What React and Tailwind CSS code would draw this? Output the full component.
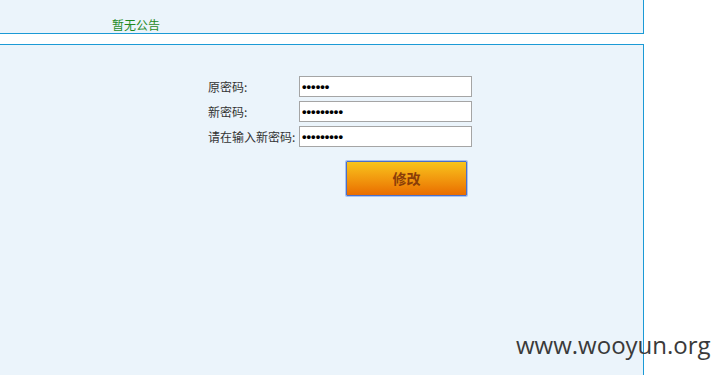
export default function App() {
  const rows = [
    { label: "原密码:", value: "123456" },
    { label: "新密码:", value: "123456789" },
    { label: "请在输入新密码:", value: "123456789" },
  ];

  return (
    <div
      className="relative w-[721px] h-[375px] overflow-hidden bg-white text-[12px] text-[#333]"
      style={{ fontFamily: '"Microsoft YaHei", "Noto Sans CJK SC", sans-serif' }}
    >
      <div className="w-[644px] h-[34px] bg-[#ebf4fb] border-r border-b border-[#1b9ad6] pl-[112px] pt-[16px]">
        <span className="text-[#1f8a1f] leading-[18px]">暂无公告</span>
      </div>

      <div className="mt-[10px] w-[644px] h-[340px] bg-[#ebf4fb] border-t border-r border-[#1b9ad6] pl-[208px] pt-[31px]">
        <div className="flex flex-col gap-[4px]">
          {rows.map((r) => (
            <div key={r.label} className="flex items-center h-[21px]">
              <label className="w-[91px] leading-[21px]">{r.label}</label>
              <input
                type="password"
                readOnly
                defaultValue={r.value}
                className="w-[173px] h-[21px] bg-white border border-[#a5a5a5] px-[2px] text-[13px] font-bold text-black outline-none font-['Liberation_Sans',sans-serif]"
              />
            </div>
          ))}
        </div>
        <button className="mt-[14px] ml-[138px] w-[121px] h-[35px] rounded-[1px] border border-[#4b6fc8] shadow-[0_0_0_1px_#a9c2f0] bg-gradient-to-b from-[#f7c41c] to-[#e96c00] text-[14px] font-bold text-[#8a3d08]">
          修改
        </button>
      </div>

      <div
        className="absolute left-[516px] top-[330px] text-[24px] leading-[30px] text-[#3a3a3a]"
        style={{ fontFamily: '"Open Sans", sans-serif' }}
      >
        www.wooyun.org
      </div>
    </div>
  );
}
